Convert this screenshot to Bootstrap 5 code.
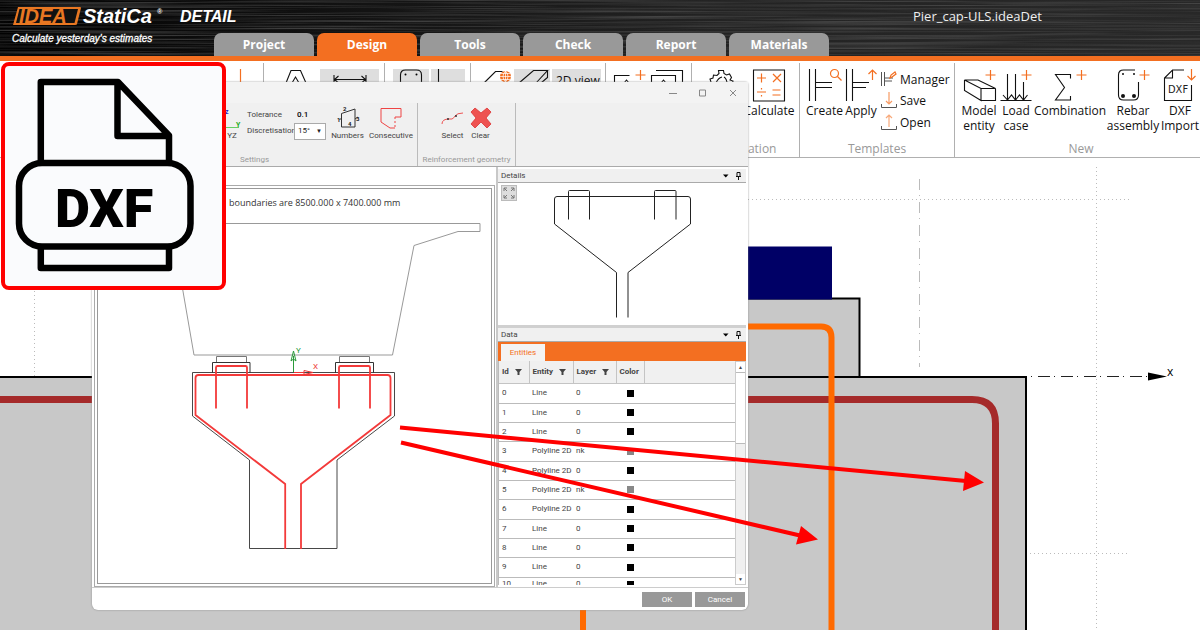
<!DOCTYPE html>
<html lang="en">
<head>
<meta charset="utf-8">
<meta name="viewport" content="width=device-width, initial-scale=1">
<title>IDEA StatiCa Detail</title>
<link href="https://cdn.jsdelivr.net/npm/bootstrap@5.3.0/dist/css/bootstrap.min.css" rel="stylesheet">
<style>
:root{--brand:#f36f21;--tab:#999;--line:#b0b0b0}
body{font-family:"Open Sans","Noto Sans",sans-serif;font-size:12px;line-height:15px;color:#111;background:#fff}
svg{display:block;overflow:visible;flex-shrink:0}
button{font:inherit;color:inherit}
.k{fill:none;stroke:#111;stroke-width:1.1}
.o{fill:none;stroke:#f36f21;stroke-width:1.2}
/* header */
.app-head{height:61px;border-bottom:5px solid var(--brand);background:#141414}
.grain{inset:0;width:100%;height:100%}
.brand-box{left:12px;top:0}
.doc-title{left:913px;top:7px;font-size:13px;line-height:18px;color:#eee}
.app-tabs{padding-left:214px;gap:3px}
.app-tabs .nav-link{width:100px;height:23px;padding:0;line-height:23px;text-align:center;font-weight:700;color:#fff;background:var(--tab);border-radius:7px 7px 0 0}
.app-tabs .nav-link.active{background:var(--brand)}
/* main ribbon */
.ribbon{height:97px;border-bottom:1px solid var(--line)}
.rgroup{flex:none;padding-top:6px;height:94px;margin-top:2px;border-right:1px solid var(--line)}
.rgroup-name{margin-top:auto;text-align:center;color:#999;line-height:16px}
.rbtn{border:0;background:none;padding:0;display:flex;flex-direction:column;align-items:center;white-space:nowrap;flex:none}
.rbtn svg{height:34px;width:100%}
.rsmall{border:0;background:none;padding:0;height:22px;display:flex;align-items:center;gap:2px}
.rsmall:first-child{height:20px}
.shade{background:#dedede;height:34px;padding:0;border:0;flex:none;white-space:nowrap}
/* dialog window */
.dlg{left:92px;top:82px;width:656px;background:#fff;border-radius:0 3px 6px 6px;box-shadow:0 0 2px #888;font-family:Roboto,"Open Sans",sans-serif;font-size:8px;line-height:12px;color:#444}
.dlg-title{height:21px;background:#f3f3f3;padding-right:10px}
.dlg-ribbon{height:64px;background:#f0f0f0;border-bottom:1px solid #aaa}
.dgroup{border-right:1px solid #bbb;flex:none}
.dgroup-name{color:#999;text-align:center;margin-top:auto}
.dbtn{border:0;background:none;padding:0;flex:none;display:flex;flex-direction:column;align-items:center;gap:2px;white-space:nowrap}
.dfield{height:16px}
.dfield label{width:47px;white-space:nowrap}
.dfield input{width:32px;height:12px;border:0;background:none;padding:0 0 0 3px;font-size:8px;color:#111}
.dfield select{width:32px;height:17px;appearance:none;border:1px solid #aaa;background:#fff;padding:0 0 0 3px;font-size:8px;color:#222;border-radius:0}
.caret-mark{right:4px;font-size:6px;color:#222}
.view-pane{width:404px;padding:18px 1px 0 2px;background:#fff}
.view-frame{border:1px solid #aaa;padding:2px;background:#fff}
.view-frame svg{width:100%;height:396px;border:1px solid #999}
.side-pane{border-left:2px solid #c8c8c8;padding:2px 2px 0 0;min-width:0}
.pane-head{height:14px;background:#f0f0f0;padding:0 4px 0 3px;border-bottom:1px solid #aaa}
.detail-box{height:145px;border-bottom:3px solid #d0d0d0}
.zoom-fit{width:16px;height:16px;padding:0;border:1px solid #bbb;background:#ddd;left:3px;top:2px}
.data-tabs{background:var(--brand);height:19px;padding:2px 0 0 3px}
.data-tabs button{border:0;background:#f3f3f3;color:var(--brand);width:44px;height:17px;padding:0}
.data-scroll{height:224px;border-left:1px solid #bbb}
.ent{border-collapse:collapse;table-layout:fixed;width:100%}
.ent th{height:22px;background:#f0f0f0;border-right:1px solid #c4c4c4;border-bottom:1px solid #c4c4c4;padding:0 3px;font-weight:700;white-space:nowrap;color:#444}
.ent th:last-child{border-right:0}
.ent th svg{display:inline-block;margin-left:4px}
.ent td{height:19px;padding:0 3px;border-bottom:1px solid #bbb;white-space:nowrap}
.ent tbody tr:nth-child(3n+1) td{height:20px}
.ent tbody tr:last-child td{vertical-align:top}
.ent tbody tr:last-child .sw{margin-top:3px}
.sw{width:7px;height:7px;background:#000;margin-left:8px}
.sw.half{background:#888}
.sbar{width:11px;background:#f0f0f0;border:1px solid #ccc;flex:none}
.sbar button{display:block;width:100%;height:10px;border:0;background:#fff;padding:0;font-size:5px;line-height:8px}
.sthumb{height:72px;background:#fff;border:solid #bbb;border-width:1px 0}
.dlg-foot{height:23px;border-top:1px solid #ccc;padding:4px 3px 0;gap:3px}
.dlg-foot button{width:50px;height:15px;border:0;background:#999;color:#fff;padding:0}
/* badge and arrows */
.dxf-badge{left:1px;top:62px;width:225px;height:228px;border:4px solid #f00;border-radius:8px;background:#fafbfd}
.dxf-badge text{font:900 54px Roboto,sans-serif}
.callouts{inset:0;width:100%;height:100%;pointer-events:none}
</style>
</head>
<body class="vh-100 d-flex flex-column overflow-hidden position-relative">

<header class="app-head position-relative d-flex flex-column justify-content-end flex-shrink-0">
  <svg class="grain position-absolute" aria-hidden="true">
    <defs>
      <filter id="brush" x="0" y="0" width="100%" height="100%" color-interpolation-filters="sRGB"><feTurbulence type="fractalNoise" baseFrequency=".004 .6" numOctaves="3" seed="7"/><feColorMatrix values="0 0 0 0 .34  0 0 0 0 .34  0 0 0 0 .34  1.6 0 0 0 -.65"/></filter>
      <linearGradient id="dark"><stop offset="0" stop-color="#020202"/><stop offset=".25" stop-color="#101010"/><stop offset=".6" stop-color="#232323"/><stop offset="1" stop-color="#282828"/></linearGradient>
    </defs>
    <rect width="100%" height="100%" fill="url(#dark)"/>
    <rect width="100%" height="100%" filter="url(#brush)"/>
  </svg>
  <svg class="brand-box position-absolute" width="230" height="50" role="img" aria-label="IDEA StatiCa Detail" font-family="'Liberation Sans',sans-serif" font-weight="700" font-style="italic" fill="#fff">
    <path d="M6 7h62q1 0 1 1l-4 16q0 1-2 1h-62z" fill="#e87722"/>
    <path d="M7.500 9h58.500l-3.500 14h-58.500z" fill="#111"/>
    <text x="7" y="23" font-size="20" fill="#e87722">IDEA</text>
    <text x="71" y="23" font-size="20">StatiCa</text>
    <text x="145" y="14" font-size="7">®</text>
    <text x="168" y="22" font-size="16">DETAIL</text>
    <text x="0" y="42" font-size="10" font-weight="400" stroke="#fff" stroke-width=".3">Calculate yesterday's estimates</text>
  </svg>
  <div class="doc-title position-absolute">Pier_cap-ULS.ideaDet</div>
  <ul class="nav app-tabs position-relative flex-nowrap">
    <li><a class="nav-link" href="#">Project</a></li>
    <li><a class="nav-link active" href="#">Design</a></li>
    <li><a class="nav-link" href="#">Tools</a></li>
    <li><a class="nav-link" href="#">Check</a></li>
    <li><a class="nav-link" href="#">Report</a></li>
    <li><a class="nav-link" href="#">Materials</a></li>
  </ul>
</header>

<div class="ribbon d-flex flex-shrink-0 overflow-hidden">
  <div class="rgroup d-flex justify-content-end" style="width:264px"><svg width="22" height="34"><path class="o" d="M-.5 0v34"/></svg></div>
  <div class="rgroup d-flex" style="width:121px">
    <svg width="56" height="34"><path class="k" d="M22 14l5-12.500h9.500l5.500 12.500M28 14l3.500-6 3.500 6"/></svg>
    <button class="shade" style="width:59px" aria-label="Dimensions"><svg width="59" height="34"><path class="k" d="M14.500 10.500h31M18.500 7l-4 3.500 4 3.500M41.500 7l4 3.500-4 3.500M14 6v9M46 6v9"/></svg></button>
  </div>
  <div class="rgroup d-flex px-2" style="width:86px;gap:2px">
    <button class="shade" style="width:36px" aria-label="Section"><svg width="36" height="34"><path class="k" d="M7.500 20V6q0-5 5-5h11q5 0 5 5v14"/><circle cx="12.500" cy="5.500" r="1"/><circle cx="23.500" cy="5.500" r="1"/></svg></button>
    <button class="shade" style="width:34px" aria-label="Part"><svg width="34" height="34"><path class="k" d="M7.500 0v14h26"/></svg></button>
  </div>
  <div class="rgroup d-flex" style="width:135px;gap:2px">
    <svg width="41" height="34"><path class="k" d="M13 14L24.500 2.500h7"/><circle cx="34.500" cy="7.500" r="5.500" fill="#f36f21"/><path d="M29 7.500h11M34.500 2v11M30 4.500h9M30 10.500h9M34.500 2q-5 5.500 0 11M34.500 2q5 5.500 0 11" fill="none" stroke="#fff" stroke-width=".7"/></svg>
    <button class="shade" style="width:36px" aria-label="3D view"><svg width="36" height="34"><path class="k" d="M5 14L19.500 1.500h14L22 14M33.500 1.500v7L27 14"/></svg></button>
    <button class="shade px-1" style="width:49px"><span class="d-block h-100 pt-1">2D view</span></button>
  </div>
  <div class="rgroup d-flex" style="width:86px">
    <svg width="86" height="34"><path class="k" d="M8.500 20V6.500h15M45.500 20V6.500h24V20M50 1.500h26.500V20M18 14l2.500-3 2.500 3M55 14l2.500-3 2.500 3"/><path class="o" d="M34.500 1v10M29.500 6h10"/></svg>
  </div>
  <div class="rgroup d-flex flex-column" style="width:108px">
    <div class="d-flex">
      <svg width="49" height="34"><path class="k" d="M17 15l2-2-1-3 3-1 .5-3 3.500.5 2-2-.5-3h5l.5 3 2.500 1.500 3-1 2 3.500-1.500 2.500 3 1-1 4M24 14q2-5 6-6M35 15q0-5-3-7"/></svg>
      <button class="rbtn" style="width:56px"><svg><path class="k" d="M12.500 1h31v31h-31z"/><path class="o" d="M16 9h9M20.500 4.500v9M32 5l8 8M40 5l-8 8M16 23h9M20.500 19v1.500M20.500 26v1.500M31.500 21h8M31.500 26h8"/></svg>Calculate</button>
    </div>
    <div class="rgroup-name">Calculation</div>
  </div>
  <div class="rgroup d-flex flex-column" style="width:155px">
    <div class="d-flex">
      <button class="rbtn ms-1" style="width:41px"><svg><path class="k" d="M5.500 0v32M11.500 0v32M12 13.500h16M12 18.500h16"/><circle class="o" cx="30.500" cy="4.500" r="4"/><path class="o" d="M33.500 7.500l4 4"/></svg>Create</button>
      <button class="rbtn" style="width:32px"><svg><path class="k" d="M1.500 0v32M7.500 0v32M8 13.500h16M8 18.500h13"/><path class="o" d="M27.500 11V1M23.500 5l4-4 4 4"/></svg>Apply</button>
      <div class="d-flex flex-column ms-1">
        <button class="rsmall"><svg width="17" height="18"><path d="M.5 2v14M3.500 2v14M4 8h8M4 11h7" fill="none" stroke="#555"/><path class="o" d="M9 8l1-3 4-3 1 2-4 3z" stroke-width="1"/></svg>Manager</button>
        <button class="rsmall"><svg width="17" height="18"><path d="M.5 13v3.500h15V13" fill="none" stroke="#555"/><path class="o" opacity=".7" d="M8 1v12M5 10l3 3 3-3"/></svg>Save</button>
        <button class="rsmall"><svg width="17" height="18"><path d="M.5 13v3.500h15V13" fill="none" stroke="#555"/><path class="o" opacity=".6" d="M8 14V2M5 5l3-3 3 3"/></svg>Open</button>
      </div>
    </div>
    <div class="rgroup-name">Templates</div>
  </div>
  <div class="rgroup d-flex flex-column border-0" style="width:252px">
    <div class="d-flex align-items-start" style="padding-left:5px">
      <button class="rbtn" style="width:38px"><svg><path class="k" d="M4.500 11h13.500l17.500 8.500H21zM4.500 11v10.500L21 31.500v-12M21 31.500h14.500v-12"/><path class="o" d="M30.500 1v10M25.500 6h10"/></svg>Model<br>entity</button>
      <button class="rbtn" style="width:36px"><svg><path class="k" d="M2.500 31.500h31M9.500 5v26M17.500 5v26M25.500 13v18M5 26l4.500 5 4-5 4 5 4-5 4 5 4-5"/><path class="o" d="M28.500 1v10M23.500 6h10"/></svg>Load<br>case</button>
      <button class="rbtn" style="width:72px"><svg><path class="k" d="M36.500 9.500V5.500H21.500l9 13-9 12.500h15v-4"/><path class="o" d="M47.500 1v10M42.500 6h10"/></svg>Combination</button>
      <button class="rbtn" style="width:54px"><svg><path class="k" d="M29 1H17.500q-5 0-5 5v20q0 5 5 5h10q5 0 5-5V13"/><g fill="#111"><circle cx="17" cy="5" r="1"/><circle cx="28" cy="5" r="1"/><circle cx="17" cy="27" r="2"/><circle cx="28" cy="27" r="2"/></g><path class="o" d="M38.500 1v10M33.500 6h10"/></svg>Rebar<br>assembly</button>
      <button class="rbtn" style="width:40px"><svg><path class="k" d="M24 1H12.500L4.500 9v22.500h27V16M12.500 1v8h-8"/><path class="o" d="M31.500 0v11M27.500 7l4 4 4-4"/><text x="8" y="24" font-family="'DejaVu Sans Condensed',sans-serif" font-size="11" fill="#222">DXF</text></svg>DXF<br>Import</button>
    </div>
    <div class="rgroup-name">New</div>
  </div>
</div>

<main class="flex-grow-1 overflow-hidden">
  <svg width="100%" height="100%" role="img" aria-label="Pier cap model">
    <g transform="translate(0 -158)" fill="none">
      <g stroke="#bbb" stroke-dasharray="1 3"><path d="M748 199.500h382M1026 553.500h104M1096.500 167v463M34.500 167v210"/></g>
      <path d="M919.500 179v188" stroke="#bbb" stroke-dasharray="11 5 1 6"/>
      <path d="M560 298.500h299.500V377H560z" fill="#c8c8c8" stroke="#000" stroke-width="2"/>
      <path d="M-5 377h1031v260H-5z" fill="#c8c8c8" stroke="#000" stroke-width="2"/>
      <path d="M700 246.500h132v53H700z" fill="#000066"/>
      <path d="M-5 399.500h977q23.500 0 23.500 24V640" stroke="#a52a2a" stroke-width="7"/>
      <path d="M583 640V326.500h238q10.500 0 10.500 11V640" stroke="#ff6a00" stroke-width="6"/>
      <path d="M1031 376.500h118" stroke="#222" stroke-dasharray="1 6 12 4"/>
      <path d="M1148 372.500l19 4-19 4z" fill="#000"/>
      <text x="1167" y="376" font-size="12" fill="#000">x</text>
    </g>
  </svg>
</main>

<section class="dlg position-absolute" role="dialog" aria-label="Import DXF">
  <div class="dlg-title d-flex align-items-center justify-content-end">
    <svg width="70" height="12" fill="none" stroke="#888"><path d="M1 6.500h8M31.500 3h6v6h-6zM62 3l6 6M68 3l-6 6"/></svg>
  </div>
  <div class="dlg-ribbon d-flex">
    <div class="dgroup d-flex flex-column" style="width:326px">
      <div class="d-flex pt-1" style="padding-left:132px">
        <button class="dbtn" style="width:16px"><svg width="16" height="21"><path d="M0 20.500h15" stroke="#6c6" fill="none"/><text x="1" y="7" font-size="7" font-weight="700" fill="#22c">z</text><text x="12" y="20" font-size="7" font-weight="700" fill="#2a2">Y</text></svg>YZ</button>
        <div class="d-flex flex-column" style="padding-left:7px">
          <div class="dfield d-flex align-items-center"><label for="tol">Tolerance</label><input id="tol" value="0.1" class="fw-semibold"></div>
          <div class="dfield d-flex align-items-center position-relative"><label for="disc">Discretisation</label><select id="disc"><option>15°</option></select><span class="caret-mark position-absolute">▼</span></div>
        </div>
        <button class="dbtn" style="width:43px"><svg width="24" height="21"><path d="M5.500 6.500L19 2v18H5.500zM5.500 11l-2 2M19 12l3-2" fill="none" stroke="#333"/><g font-size="6" font-weight="700" fill="#222"><text x="7" y="4">2</text><text x="1" y="15">1</text><text x="20" y="14">3</text><text x="12" y="19">4</text></g></svg>Numbers</button>
        <button class="dbtn" style="width:44px"><svg width="24" height="21"><path d="M16 10h6V1.500H2V15l9 6h5" fill="none" stroke="#e44"/><path d="M16 10v11" stroke="#e44" stroke-dasharray="2 2"/></svg>Consecutive</button>
      </div>
      <div class="dgroup-name">Settings</div>
    </div>
    <div class="dgroup d-flex flex-column" style="width:98px">
      <div class="d-flex justify-content-center pt-1" style="gap:4px">
        <button class="dbtn" style="width:24px"><svg width="24" height="21"><path d="M1 17q0-5 7-5h3q2-1 3-3 2-3 8-3" fill="none" stroke="#e55"/><circle cx="7" cy="12" r="1" fill="#333"/><circle cx="15" cy="9" r="1" fill="#333"/></svg>Select</button>
        <button class="dbtn" style="width:24px"><svg width="24" height="21"><path d="M2 5l4-4 6 5 6-5 4 4-5 6 5 6-4 4-6-6-6 6-4-4 5-6z" fill="#ee5351" stroke="#d33" stroke-width=".8"/></svg>Clear</button>
      </div>
      <div class="dgroup-name text-nowrap">Reinforcement geometry</div>
    </div>
  </div>
  <div class="d-flex">
    <div class="view-pane flex-shrink-0">
      <div class="view-frame">
        <svg role="img" aria-label="Imported section">
          <g transform="translate(-98 -189)" fill="none">
            <text x="229" y="206" font-family="'Open Sans',sans-serif" font-size="9" fill="#333">boundaries are 8500.000 x 7400.000 mm</text>
            <path d="M120 223.500h360v8h-22l-44 14-21.500 109.500H194L175 245" stroke="#999"/>
            <path d="M216.500 363v-6.500h30v6.500M339.500 363v-6.500h30v6.500" stroke="#777"/>
            <path d="M212.500 373v-10.500h37.500v10.500M335.500 373v-10.500h38v10.500" stroke="#333"/>
            <path d="M192.500 372.500h202v43.500l-57.500 44v88.500h-87.500V460l-57-44z" stroke="#333" stroke-width=".9"/>
            <g stroke="#f33a3a" stroke-width="1.800">
              <path d="M285.200 549v-65L195.500 415v-37q0-3 3-3h189q3 0 3 3v37l-89.500 69v65"/>
              <path d="M216 408.500v-41q0-1.500 1.500-1.500h28q1.500 0 1.500 1.500v41M339 408.500v-41q0-1.500 1.500-1.500h28q1.500 0 1.500 1.500v41"/>
            </g>
            <path d="M293.500 372v-16" stroke="#2a9a3a"/><path d="M291 361l2.500-10 2.500 10-2.500-2z" stroke="#2a9a3a"/>
            <path d="M294 372.500h10" stroke="#e33"/><path d="M304 370.500l9 2-9 2z" stroke="#e33"/>
            <text x="296" y="353" font-size="8" fill="#2a9a3a">Y</text><text x="313" y="369" font-size="8" fill="#e33">X</text>
          </g>
        </svg>
      </div>
    </div>
    <div class="side-pane flex-grow-1">
      <div class="pane-head d-flex align-items-center justify-content-between"><span>Details</span><svg width="20" height="10"><path d="M1 3.500h5.500L3.800 6.500z"/><path d="M15 1.500h3v4h-3zM14 5.500h5M16.500 5.500v3.500" fill="none" stroke="#111"/></svg></div>
      <div class="detail-box position-relative">
        <button class="zoom-fit position-absolute" aria-label="Zoom to fit"><svg width="14" height="14" fill="none" stroke="#777"><path d="M2 5V2h3M9 2h3v3M12 9v3H9M5 12H2V9M2 2l3 3M12 2L9 5M12 12L9 9M2 12l3-3"/></svg></button>
        <svg width="100%" height="139" role="img" aria-label="Selected reinforcement"><path transform="translate(-498 -183)" fill="none" stroke="#222" d="M616.500 317.500v-45L554.500 224v-25q0-2.500 2.500-2.500h131q2.500 0 2.500 2.500v25l-62.500 48.500v45M568.500 219.500v-28q0-1 1-1h19q1 0 1 1v28M654.500 219.500v-28q0-1 1-1h19.500q1 0 1 1v28"/></svg>
      </div>
      <div class="pane-head d-flex align-items-center justify-content-between"><span>Data</span><svg width="20" height="10"><path d="M1 3.500h5.500L3.800 6.500z"/><path d="M15 1.500h3v4h-3zM14 5.500h5M16.500 5.500v3.500" fill="none" stroke="#111"/></svg></div>
      <div class="data-tabs"><button>Entities</button></div>
      <div class="data-scroll d-flex">
        <div class="flex-grow-1 overflow-hidden">
          <table class="ent">
            <colgroup><col style="width:30px"><col style="width:44px"><col style="width:43px"><col style="width:28px"><col></colgroup>
            <thead><tr>
              <th scope="col">Id <svg width="7" height="6"><path d="M0 0h7L4.500 3v3h-2V3z" fill="#444"/></svg></th>
              <th scope="col">Entity <svg width="7" height="6"><path d="M0 0h7L4.500 3v3h-2V3z" fill="#444"/></svg></th>
              <th scope="col">Layer <svg width="7" height="6"><path d="M0 0h7L4.500 3v3h-2V3z" fill="#444"/></svg></th>
              <th scope="col">Color</th><th></th>
            </tr></thead>
            <tbody>
              <tr><td>0</td><td>Line</td><td>0</td><td><div class="sw"></div></td><td></td></tr>
              <tr><td>1</td><td>Line</td><td>0</td><td><div class="sw"></div></td><td></td></tr>
              <tr><td>2</td><td>Line</td><td>0</td><td><div class="sw"></div></td><td></td></tr>
              <tr><td>3</td><td>Polyline 2D</td><td>nk</td><td><div class="sw half"></div></td><td></td></tr>
              <tr><td>4</td><td>Polyline 2D</td><td>0</td><td><div class="sw"></div></td><td></td></tr>
              <tr><td>5</td><td>Polyline 2D</td><td>nk</td><td><div class="sw half"></div></td><td></td></tr>
              <tr><td>6</td><td>Polyline 2D</td><td>0</td><td><div class="sw"></div></td><td></td></tr>
              <tr><td>7</td><td>Line</td><td>0</td><td><div class="sw"></div></td><td></td></tr>
              <tr><td>8</td><td>Line</td><td>0</td><td><div class="sw"></div></td><td></td></tr>
              <tr><td>9</td><td>Line</td><td>0</td><td><div class="sw"></div></td><td></td></tr>
              <tr><td>10</td><td>Line</td><td>0</td><td><div class="sw"></div></td><td></td></tr>
            </tbody>
          </table>
        </div>
        <div class="sbar d-flex flex-column"><button aria-label="Scroll up">▲</button><div class="sthumb"></div><button class="mt-auto" aria-label="Scroll down">▼</button></div>
      </div>
    </div>
  </div>
  <div class="dlg-foot d-flex justify-content-end"><button>OK</button><button>Cancel</button></div>
</section>

<div class="dxf-badge position-absolute">
  <svg width="217" height="220" role="img" aria-label="DXF file">
    <g transform="translate(-5 -66)" fill="#fafbfd" stroke="#000" stroke-width="6.500" stroke-linejoin="round">
      <path d="M40.800 82H118l51 53.500V268H40.800zM117.500 82v54H169"/>
      <rect x="19" y="163" width="171.500" height="83.500" rx="23"/>
    </g>
    <text x="50" y="161">DXF</text>
  </svg>
</div>

<svg class="callouts position-absolute" aria-hidden="true" fill="#f00">
  <path d="M400 427.500L966 481M401 442.500L800 535.500" stroke="#f00" stroke-width="4"/>
  <path d="M984 482.500L965 471l-2 20zM818 539.500L801 526l-5 18.500z"/>
</svg>

<script src="https://cdn.jsdelivr.net/npm/bootstrap@5.3.0/dist/js/bootstrap.bundle.min.js"></script>
</body>
</html>
